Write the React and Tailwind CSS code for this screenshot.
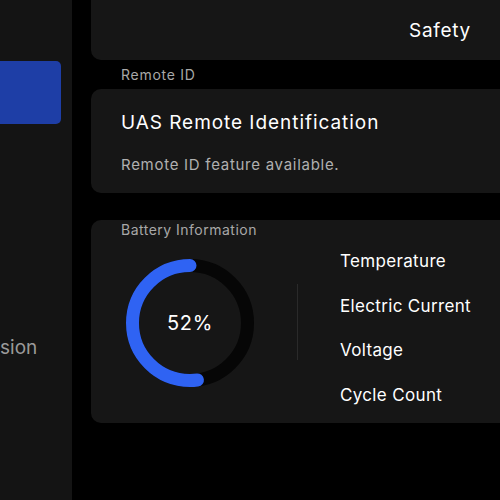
import React from "react";

function BatteryRing({ percent }) {
  const r = 57.5;
  const c = 2 * Math.PI * r;
  const len = (percent / 100) * c;
  return (
    <div className="relative w-[130px] h-[130px]">
      <svg width="130" height="130" viewBox="0 0 130 130">
        <circle cx="65" cy="65" r={r} fill="none" stroke="#060606" strokeWidth="13" />
        <circle
          cx="65"
          cy="65"
          r={r}
          fill="none"
          stroke="#2f63f3"
          strokeWidth="13"
          strokeLinecap="round"
          strokeDasharray={`${len} ${c}`}
          transform="translate(130 0) scale(-1 1) rotate(-90 65 65)"
        />
      </svg>
      <div className="absolute inset-0 flex items-center justify-center text-[20px] text-white tracking-[0.03em]">
        {percent}%
      </div>
    </div>
  );
}

export default function App() {
  const stats = ["Temperature", "Electric Current", "Voltage", "Cycle Count"];

  return (
    <div
      className="w-[500px] h-[500px] overflow-hidden bg-black flex tracking-[0.045em]"
      style={{ fontFamily: 'Inter, "Liberation Sans", sans-serif' }}
    >
      {/* Sidebar */}
      <aside className="w-[72px] shrink-0 h-full bg-[#141414] flex flex-col">
        <div className="mt-[61px] w-[61px] h-[63px] bg-[#1e3ea6] rounded-r-[5px]" />
        <div className="mt-[211px] text-[19px] text-[#9a9a9a] leading-[25px] tracking-normal">
          sion
        </div>
      </aside>

      {/* Main */}
      <main className="ml-[19px] flex-1 min-w-0 flex flex-col">
        <div className="h-[60px] bg-[#161616] rounded-bl-[10px] flex items-center justify-end pr-[29px] pt-[2px] text-[19px] text-white">
          Safety
        </div>

        <div className="pl-[30px] pt-[4px] h-[29px] text-[14px] text-[#a8a8a8]">Remote ID</div>

        <section className="h-[104px] bg-[#161616] rounded-l-[10px] pl-[30px] pt-[22px]">
          <div className="text-[19px] text-white leading-[24px] tracking-[0.05em]">UAS Remote Identification</div>
          <div className="mt-[19px] text-[15px] text-[#b0b0b0]">Remote ID feature available.</div>
        </section>

        <section className="mt-[27px] h-[203px] bg-[#161616] rounded-l-[10px] pl-[30px] pt-[1px]">
          <div className="text-[14px] text-[#a8a8a8] leading-[18px] tracking-[0.035em]">Battery Information</div>
          <div className="flex items-start mt-[2px]">
            <div className="mt-[17px] ml-[4px]">
              <BatteryRing percent={52} />
            </div>
            <div className="ml-[42px] mt-[43px] w-px h-[76px] bg-[#2a2a2a]" />
            <div className="ml-[42px] mt-[10px] flex flex-col gap-[24px] text-[17px] text-white leading-[20.5px] tracking-[0.02em]">
              {stats.map((s) => (
                <div key={s}>{s}</div>
              ))}
            </div>
          </div>
        </section>
      </main>
    </div>
  );
}
